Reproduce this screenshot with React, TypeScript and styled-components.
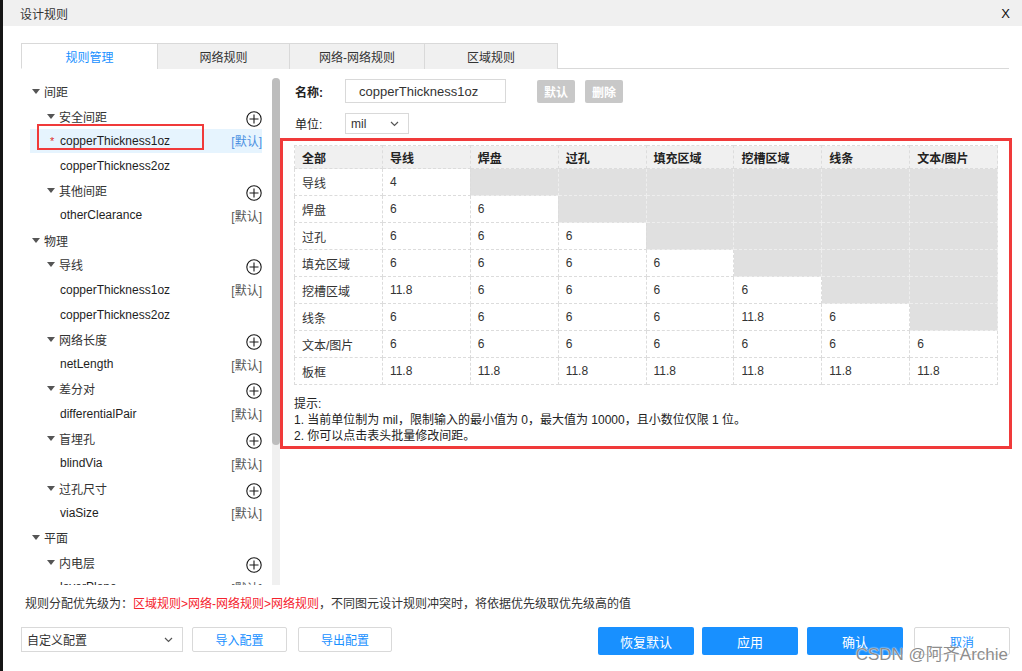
import React from "react";
import styled, { createGlobalStyle } from "styled-components";

const GlobalStyle = createGlobalStyle`
  html, body { margin: 0; padding: 0; background: #fff; }
  body {
    font-family: "Liberation Sans", "Noto Sans CJK SC", sans-serif;
    font-size: 12px;
    color: #333;
  }
  * { box-sizing: border-box; }
`;

const Window = styled.div`
  position: relative;
  width: 1022px;
  height: 671px;
  border-left: 3px solid #151515;
  background: #fff;
  overflow: hidden;
  display: flex;
  flex-direction: column;
`;

const TitleBar = styled.div`
  flex: none;
  height: 26px;
  background: #f0f0f0;
  display: flex;
  align-items: center;
  justify-content: space-between;
  padding: 0 12px 0 17px;
  font-size: 12px;
  color: #333;
`;

const CloseX = styled.span`
  font-size: 13px;
  color: #111;
`;

const Body = styled.div`
  flex: 1;
  display: flex;
  flex-direction: column;
  padding: 17px 10px 0 18px;
`;

const TabBar = styled.div`
  flex: none;
  display: flex;
  height: 26px;
  border-bottom: 1px solid #d9d9d9;
  margin-right: 3px;
`;

const Tab = styled.div<{ $w: number; $active?: boolean }>`
  width: ${(p) => p.$w}px;
  height: 26px;
  margin-left: -1px;
  &:first-child { margin-left: 0; }
  border: 1px solid #d9d9d9;
  border-bottom: ${(p) => (p.$active ? "1px solid #fff" : "none")};
  background: ${(p) => (p.$active ? "#fff" : "#f0f0f0")};
  color: ${(p) => (p.$active ? "#1890ff" : "#333")};
  display: flex;
  align-items: center;
  justify-content: center;
  font-size: 12px;
`;

const Main = styled.div`
  flex: none;
  height: 516px;
  display: flex;
`;

const LeftPanel = styled.div`
  width: 259px;
  flex: none;
  display: flex;
`;

const Tree = styled.div`
  width: 241px;
  height: 100%;
  overflow: hidden;
  padding: 10px 0 0 9px;
`;

const ScrollTrack = styled.div`
  width: 8px;
  margin: 9px 0 0 10px;
  background: #f0f0f0;
  border-radius: 4px 4px 0 0;
`;

const ScrollThumb = styled.div`
  height: 367px;
  background: #bdbdbd;
  border-radius: 4px;
`;

const Row = styled.div<{ $selected?: boolean }>`
  position: relative;
  width: 232px;
  height: 24.8px;
  display: flex;
  align-items: center;
  background: ${(p) => (p.$selected ? "#e6f4fe" : "transparent")};
`;

const RowIndent = styled.div<{ $pad: number }>`
  flex: none;
  width: ${(p) => p.$pad}px;
`;

const ArrowBox = styled.div`
  flex: none;
  width: 14px;
  padding-left: 2px;
  display: flex;
  align-items: center;
`;

const Caret = styled.span`
  display: block;
  width: 0;
  height: 0;
  border-left: 4.5px solid transparent;
  border-right: 4.5px solid transparent;
  border-top: 5px solid #555;
`;

const GroupLabel = styled.span`
  flex: 1;
  color: #333;
  font-size: 12px;
`;

const LeafLabel = styled.span`
  flex: 1;
  color: #1e1e1e;
  font-size: 12px;
`;

const Star = styled.span`
  position: absolute;
  left: 20px;
  top: 6px;
  color: #e0302c;
  font-size: 11px;
`;

const DefaultTag = styled.span<{ $active?: boolean }>`
  flex: none;
  font-size: 12px;
  color: ${(p) => (p.$active ? "#4a90e2" : "#555")};
`;

const PlusWrap = styled.span`
  flex: none;
  display: flex;
  margin: 5px 0 0 0;
`;

const Annotation = styled.div<{ $thick: number }>`
  position: absolute;
  left: 7px;
  top: -5px;
  width: 167px;
  height: 26px;
  border: ${(p) => p.$thick}px solid #f03a3a;
  pointer-events: none;
`;

const RightPanel = styled.div`
  flex: 1;
  display: flex;
  flex-direction: column;
`;

const FormRow = styled.div<{ $top: number; $h: number }>`
  display: flex;
  align-items: center;
  margin-top: ${(p) => p.$top}px;
  height: ${(p) => p.$h}px;
  padding-left: 15px;
`;

const FieldLabel = styled.span<{ $bold?: boolean }>`
  width: 50px;
  font-size: 12px;
  color: #222;
  font-weight: ${(p) => (p.$bold ? 700 : 400)};
`;

const TextInput = styled.div`
  width: 161px;
  height: 24px;
  border: 1px solid #d9d9d9;
  padding-left: 13px;
  display: flex;
  align-items: center;
  font-size: 13px;
  color: #333;
`;

const GrayButton = styled.button<{ $gap: number }>`
  margin-left: ${(p) => p.$gap}px;
  width: 38px;
  height: 23px;
  border: none;
  border-radius: 2px;
  background: #c8c8c8;
  color: #fff;
  font-family: inherit;
  font-size: 12px;
  font-weight: 700;
  padding: 0;
`;

const SelectBox = styled.div<{ $w: number; $h: number }>`
  width: ${(p) => p.$w}px;
  height: ${(p) => p.$h}px;
  border: 1px solid #d9d9d9;
  display: flex;
  align-items: center;
  justify-content: space-between;
  padding: 0 9px 0 5px;
  font-size: 12px;
  color: #333;
  background: #fff;
`;

const RedSection = styled.div`
  margin-top: 4px;
  height: 311px;
  border: 3px solid #f03a3a;
  padding: 4px 10px 0 11px;
`;

const Grid = styled.table`
  border-collapse: collapse;
  table-layout: fixed;
  width: 704px;
`;

const HeadCell = styled.th`
  height: 23px;
  padding: 0 0 0 7px;
  text-align: left;
  background: #f0f0f0;
  border: 1px dashed #dcdcdc;
  font-weight: 700;
  font-size: 12px;
  color: #222;
`;

const Cell = styled.td<{ $off?: boolean }>`
  height: 27px;
  padding: 0 0 0 7px;
  text-align: left;
  font-size: 12px;
  color: #333;
  background: ${(p) => (p.$off ? "#e0e0e0" : "#fff")};
  border: 1px dashed ${(p) => (p.$off ? "#eeeeee" : "#dcdcdc")};
`;

const Hint = styled.div`
  margin-top: 11px;
  font-size: 12px;
  line-height: 16px;
  color: #222;
`;

const PriorityLine = styled.div`
  margin-top: 11px;
  padding-left: 4px;
  font-size: 12px;
  line-height: 16px;
  color: #333;
`;

const Red = styled.span`
  color: #f5222d;
`;

const Footer = styled.div`
  margin-top: 15px;
  display: flex;
  align-items: flex-start;
`;

const OutlineButton = styled.button<{ $w: number; $h: number; $gap: number }>`
  margin-left: ${(p) => p.$gap}px;
  width: ${(p) => p.$w}px;
  height: ${(p) => p.$h}px;
  border: 1px solid #d9d9d9;
  border-radius: 2px;
  background: #fff;
  color: #1890ff;
  font-family: inherit;
  font-size: 12px;
  padding: 0;
`;

const RightGroup = styled.div`
  margin-left: auto;
  margin-right: 2px;
  display: flex;
`;

const PrimaryButton = styled.button<{ $gap: number }>`
  margin-left: ${(p) => p.$gap}px;
  width: 96px;
  height: 28px;
  border: none;
  border-radius: 2px;
  background: #1890ff;
  color: #fff;
  font-family: inherit;
  font-size: 13px;
  padding: 0;
`;

const Watermark = styled.div`
  position: absolute;
  right: 14px;
  bottom: 6px;
  font-size: 17px;
  color: rgba(110, 110, 110, 0.8);
  text-shadow: 0 0 2px #fff, 0 0 1px #fff;
  pointer-events: none;
`;

const Chevron = () => (
  <svg width="9" height="6" viewBox="0 0 9 6">
    <path d="M1 1l3.5 3.5L8 1" fill="none" stroke="#555" strokeWidth="1.2" />
  </svg>
);

const PlusCircle = () => (
  <svg width="16" height="16" viewBox="0 0 16 16">
    <circle cx="8" cy="8" r="7.2" fill="none" stroke="#1a1a1a" strokeWidth="1.1" />
    <path d="M8 3.5v9M3.5 8h9" stroke="#1a1a1a" strokeWidth="1.1" />
  </svg>
);

type Node =
  | { kind: "group"; level: 1 | 2; label: string; plus?: boolean }
  | { kind: "leaf"; label: string; tag?: boolean; selected?: boolean };

const nodes: Node[] = [
  { kind: "group", level: 1, label: "间距" },
  { kind: "group", level: 2, label: "安全间距", plus: true },
  { kind: "leaf", label: "copperThickness1oz", tag: true, selected: true },
  { kind: "leaf", label: "copperThickness2oz" },
  { kind: "group", level: 2, label: "其他间距", plus: true },
  { kind: "leaf", label: "otherClearance", tag: true },
  { kind: "group", level: 1, label: "物理" },
  { kind: "group", level: 2, label: "导线", plus: true },
  { kind: "leaf", label: "copperThickness1oz", tag: true },
  { kind: "leaf", label: "copperThickness2oz" },
  { kind: "group", level: 2, label: "网络长度", plus: true },
  { kind: "leaf", label: "netLength", tag: true },
  { kind: "group", level: 2, label: "差分对", plus: true },
  { kind: "leaf", label: "differentialPair", tag: true },
  { kind: "group", level: 2, label: "盲埋孔", plus: true },
  { kind: "leaf", label: "blindVia", tag: true },
  { kind: "group", level: 2, label: "过孔尺寸", plus: true },
  { kind: "leaf", label: "viaSize", tag: true },
  { kind: "group", level: 1, label: "平面" },
  { kind: "group", level: 2, label: "内电层", plus: true },
  { kind: "leaf", label: "layerPlane", tag: true },
];

const headers = ["全部", "导线", "焊盘", "过孔", "填充区域", "挖槽区域", "线条", "文本/图片"];
const rows: { label: string; values: string[] }[] = [
  { label: "导线", values: ["4"] },
  { label: "焊盘", values: ["6", "6"] },
  { label: "过孔", values: ["6", "6", "6"] },
  { label: "填充区域", values: ["6", "6", "6", "6"] },
  { label: "挖槽区域", values: ["11.8", "6", "6", "6", "6"] },
  { label: "线条", values: ["6", "6", "6", "6", "11.8", "6"] },
  { label: "文本/图片", values: ["6", "6", "6", "6", "6", "6", "6"] },
  { label: "板框", values: ["11.8", "11.8", "11.8", "11.8", "11.8", "11.8", "11.8"] },
];

const tabs = [
  { label: "规则管理", w: 137, active: true },
  { label: "网络规则", w: 133 },
  { label: "网络-网络规则", w: 136 },
  { label: "区域规则", w: 134 },
];

export default function App() {
  return (
    <>
      <GlobalStyle />
      <Window>
        <TitleBar>
          <span>设计规则</span>
          <CloseX>X</CloseX>
        </TitleBar>
        <Body>
          <TabBar>
            {tabs.map((t) => (
              <Tab key={t.label} $w={t.w} $active={t.active}>
                {t.label}
              </Tab>
            ))}
          </TabBar>
          <Main>
            <LeftPanel>
              <Tree>
                {nodes.map((n, i) =>
                  n.kind === "group" ? (
                    <Row key={i}>
                      <RowIndent $pad={n.level === 1 ? 0 : 15} />
                      <ArrowBox>
                        <Caret />
                      </ArrowBox>
                      <GroupLabel>{n.label}</GroupLabel>
                      {n.plus && (
                        <PlusWrap>
                          <PlusCircle />
                        </PlusWrap>
                      )}
                    </Row>
                  ) : (
                    <Row key={i} $selected={n.selected}>
                      {n.selected && <Star>*</Star>}
                      <RowIndent $pad={30} />
                      <LeafLabel>{n.label}</LeafLabel>
                      {n.tag && <DefaultTag $active={n.selected}>[默认]</DefaultTag>}
                      {n.selected && <Annotation $thick={2} />}
                    </Row>
                  )
                )}
              </Tree>
              <ScrollTrack>
                <ScrollThumb />
              </ScrollTrack>
            </LeftPanel>
            <RightPanel>
              <FormRow $top={10} $h={24}>
                <FieldLabel $bold>名称:</FieldLabel>
                <TextInput>copperThickness1oz</TextInput>
                <GrayButton $gap={31}>默认</GrayButton>
                <GrayButton $gap={10}>删除</GrayButton>
              </FormRow>
              <FormRow $top={10} $h={21}>
                <FieldLabel>单位:</FieldLabel>
                <SelectBox $w={64} $h={21}>
                  <span>mil</span>
                  <Chevron />
                </SelectBox>
              </FormRow>
              <RedSection>
                <Grid>
                  <thead>
                    <tr>
                      {headers.map((h) => (
                        <HeadCell key={h}>{h}</HeadCell>
                      ))}
                    </tr>
                  </thead>
                  <tbody>
                    {rows.map((r) => (
                      <tr key={r.label}>
                        <Cell>{r.label}</Cell>
                        {Array.from({ length: 7 }).map((_, c) => {
                          const v = r.values[c];
                          return (
                            <Cell key={c} $off={v === undefined}>
                              {v ?? ""}
                            </Cell>
                          );
                        })}
                      </tr>
                    ))}
                  </tbody>
                </Grid>
                <Hint>
                  <div>提示:</div>
                  <div>1. 当前单位制为 mil，限制输入的最小值为 0，最大值为 10000，且小数位仅限 1 位。</div>
                  <div>2. 你可以点击表头批量修改间距。</div>
                </Hint>
              </RedSection>
            </RightPanel>
          </Main>
          <PriorityLine>
            规则分配优先级为：<Red>区域规则&gt;网络-网络规则&gt;网络规则</Red>，不同图元设计规则冲突时，将依据优先级取优先级高的值
          </PriorityLine>
          <Footer>
            <SelectBox $w={162} $h={25}>
              <span>自定义配置</span>
              <Chevron />
            </SelectBox>
            <OutlineButton $w={95} $h={25} $gap={9}>导入配置</OutlineButton>
            <OutlineButton $w={94} $h={25} $gap={11}>导出配置</OutlineButton>
            <RightGroup>
              <PrimaryButton $gap={0}>恢复默认</PrimaryButton>
              <PrimaryButton $gap={8}>应用</PrimaryButton>
              <PrimaryButton $gap={9}>确认</PrimaryButton>
              <OutlineButton $w={96} $h={28} $gap={11}>取消</OutlineButton>
            </RightGroup>
          </Footer>
        </Body>
        <Watermark>CSDN @阿齐Archie</Watermark>
      </Window>
    </>
  );
}
